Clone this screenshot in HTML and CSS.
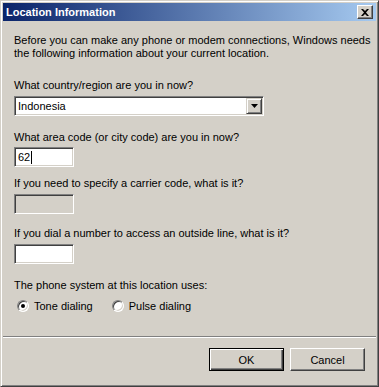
FILE: index.html
```html
<!DOCTYPE html>
<html lang="en">
<head>
  <meta charset="UTF-8">
  <title>Location Information</title>
  <link rel="stylesheet" href="styles.css">
</head>
<body>

  <!-- Dialog window -->
  <div class="dialog">
    <div class="titlebar">
      <span class="title">Location Information</span>
      <span class="close-btn">
        <svg width="8" height="7" viewBox="0 0 8 7">
          <path d="M0 0h2l2 2 2-2h2L5 3.5 8 7H6L4 5 2 7H0l3-3.5z" fill="#000"/>
        </svg>
      </span>
    </div>

    <div class="content">
      <p class="intro">Before you can make any phone or modem connections, Windows needs<br>the following information about your current location.</p>

      <label class="field-label first">What country/region are you in now?</label>
      <div class="combo">
        <span class="combo-value">Indonesia</span>
        <span class="combo-arrow">
          <svg width="7" height="4" viewBox="0 0 7 4"><path d="M0 0h7L3.5 4z" fill="#000"/></svg>
        </span>
      </div>

      <label class="field-label area">What area code (or city code) are you in now?</label>
      <div class="textbox area-box">62<span class="caret"></span></div>

      <label class="field-label carrier">If you need to specify a carrier code, what is it?</label>
      <div class="textbox disabled"></div>

      <label class="field-label outside">If you dial a number to access an outside line, what is it?</label>
      <div class="textbox"></div>

      <label class="field-label phone">The phone system at this location uses:</label>
      <div class="radio-row">
        <span class="radio checked"></span><span class="radio-text">Tone dialing</span>
        <span class="radio pulse"></span><span class="radio-text">Pulse dialing</span>
      </div>
    </div>

    <div class="separator"></div>

    <!-- Buttons -->
    <div class="buttons">
      <button class="btn btn-default">OK</button>
      <button class="btn">Cancel</button>
    </div>
  </div>

</body>
</html>
```

FILE: styles.css
```css
/* General styling */
body {
  margin: 0;
  background-color: #d4d0c8;
  font-family: "Liberation Sans", Arial, sans-serif;
  font-size: 11px;
  color: #000;
}

/* Window frame */
.dialog {
  width: 379px;
  height: 387px;
  box-sizing: border-box;
  border: 1px solid;
  border-color: #d4d0c8 #404040 #404040 #d4d0c8;
  box-shadow: inset 1px 1px #fff, inset -1px -1px #808080;
  padding: 2px;
  display: flex;
  flex-direction: column;
}

/* Title bar */
.titlebar {
  height: 18px;
  display: flex;
  align-items: center;
  background: linear-gradient(to right, #0a246a, #a6caf0);
  padding: 0 3px 0 3px;
}

.title {
  color: #fff;
  font-weight: bold;
  font-size: 11px;
}

.close-btn {
  margin-left: auto;
  width: 16px;
  height: 14px;
  box-sizing: border-box;
  display: flex;
  align-items: center;
  justify-content: center;
  background: #d4d0c8;
  border: 1px solid;
  border-color: #fff #404040 #404040 #fff;
  box-shadow: inset -1px -1px #808080;
}

/* Content */
.content {
  padding: 0 11px;
}

.intro {
  margin: 13px 0 0;
  line-height: 13px;
  white-space: nowrap;
}

.field-label {
  display: block;
  line-height: 13px;
  white-space: nowrap;
}

.field-label.first { margin-top: 19px; }
.field-label.area { margin-top: 15px; }
.field-label.carrier { margin-top: 10px; }
.field-label.outside { margin-top: 13px; }
.field-label.phone { margin-top: 15px; }

/* Sunken controls */
.combo,
.textbox {
  box-sizing: border-box;
  height: 20px;
  background: #fff;
  border: 1px solid;
  border-color: #808080 #fff #fff #808080;
  box-shadow: inset 1px 1px #404040, inset -1px -1px #d4d0c8;
  display: flex;
  align-items: center;
}

.combo {
  width: 250px;
  margin-top: 4px;
  padding: 0 1px 0 3px;
}

.combo-value {
  flex: 1;
}

.combo-arrow {
  width: 16px;
  height: 16px;
  box-sizing: border-box;
  display: flex;
  align-items: center;
  justify-content: center;
  background: #d4d0c8;
  border: 1px solid;
  border-color: #d4d0c8 #404040 #404040 #d4d0c8;
  box-shadow: inset 1px 1px #fff, inset -1px -1px #808080;
}

.textbox {
  width: 60px;
  margin-top: 4px;
  padding: 0 3px;
}

.textbox.area-box {
  margin-top: 3px;
}

.textbox.disabled {
  background: #d4d0c8;
}

.caret {
  width: 1px;
  height: 13px;
  background: #000;
  margin-left: 1px;
}

/* Radio buttons */
.radio-row {
  margin-top: 7px;
  height: 13px;
  display: flex;
  align-items: center;
}

.radio {
  width: 12px;
  height: 12px;
  box-sizing: border-box;
  border-radius: 50%;
  background: #fff;
  border: 1px solid;
  border-color: #808080 #fff #fff #808080;
  box-shadow: inset 1px 1px #404040, inset -1px -1px #d4d0c8;
  display: flex;
  align-items: center;
  justify-content: center;
  margin-left: 3px;
}

.radio.checked::after {
  content: '';
  width: 4px;
  height: 4px;
  border-radius: 50%;
  background: #000;
}

.radio.pulse {
  margin-left: 19px;
}

.radio-text {
  margin-left: 5px;
}

/* Separator */
.separator {
  margin-top: 24px;
  height: 1px;
  background: #808080;
  border-bottom: 1px solid #fff;
}

/* Buttons */
.buttons {
  display: flex;
  justify-content: flex-end;
  gap: 6px;
  margin-top: 10px;
  padding-right: 11px;
}

.btn {
  width: 75px;
  height: 23px;
  box-sizing: border-box;
  padding: 0;
  font: inherit;
  color: #000;
  background: #d4d0c8;
  border: 1px solid;
  border-color: #fff #404040 #404040 #fff;
  box-shadow: inset -1px -1px #808080;
}

.btn-default {
  border-color: #000;
  box-shadow: inset 1px 1px #fff, inset -1px -1px #404040, inset -2px -2px #808080;
}
```
